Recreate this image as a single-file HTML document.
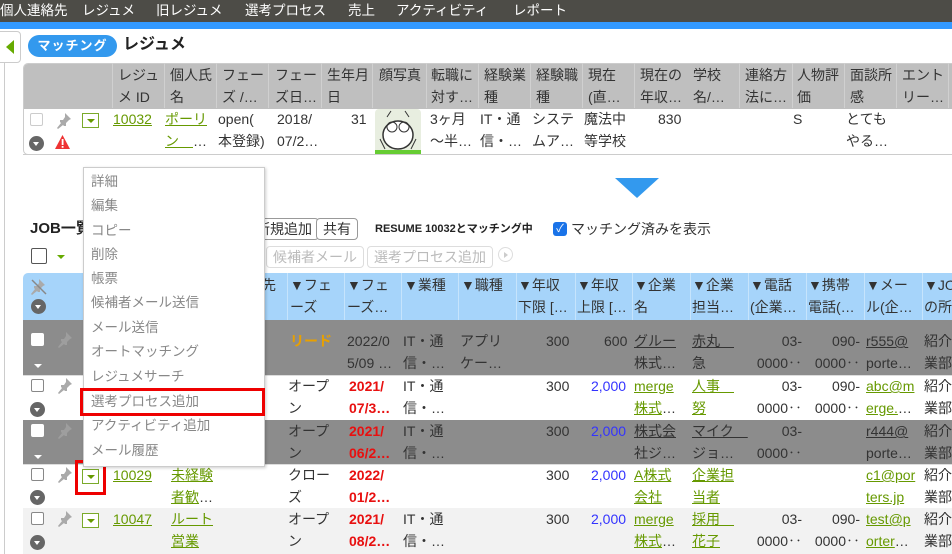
<!DOCTYPE html>
<html><head><meta charset="utf-8"><style>
*{margin:0;padding:0;box-sizing:border-box}
body{width:952px;height:554px;overflow:hidden;position:relative;background:#fff;font-family:"Liberation Sans","Noto Sans CJK JP",sans-serif;font-size:14px;color:#333}
.a{position:absolute;white-space:nowrap;line-height:22px}
.rt{text-align:right;width:60px}
.g{color:#669900;text-decoration:underline}
.r{color:#e81010;font-weight:bold}
.b{color:#3333ff}
.cb{position:absolute;width:13px;height:13px;border:1px solid #888;border-radius:2px;background:#fff}
.dc{position:absolute;width:15px;height:15px;border-radius:50%;background:#666}
.dc:after{content:"";position:absolute;left:4px;top:6px;border-left:3.5px solid transparent;border-right:3.5px solid transparent;border-top:4px solid #fff}
.gb{position:absolute;width:17px;height:15px;border:1px solid #7aaa2a;background:#fff}
.gb:after{content:"";position:absolute;left:4px;top:5px;border-left:4px solid transparent;border-right:4px solid transparent;border-top:4px solid #669900}
.pin{position:absolute;width:16px;height:18px}
.btn{position:absolute;border:1px solid #999;border-radius:4px;height:22px;line-height:20px;padding:0 6px;font-size:14px;background:#fff}
.dis{color:#bbb;border-color:#ddd}
.mi{position:absolute;left:91px;color:#888;font-size:13.5px;line-height:20px}
.vl{position:absolute;width:1px}
</style></head><body>
<svg width="0" height="0" style="position:absolute"><defs><g id="pn"><path d="M9 1 L15 7 L13 8 L10 11 L10 14 L8 14 L4 10 L4 8 L7 8 L9 5 Z M5 11 L1 16 L2 17 L7 13 Z" fill="#aaa"/></g></defs></svg>
<!-- nav -->
<div style="position:absolute;left:0;top:0;width:952px;height:22px;background:#4d4c47"></div>
<div style="position:absolute;left:0;top:22px;width:952px;height:7px;background:#3399ff"></div>
<div class="a" style="color:#fff;top:0;left:0;font-size:13.5px">個人連絡先</div>
<div class="a" style="color:#fff;top:0;left:82px;font-size:13.5px">レジュメ</div>
<div class="a" style="color:#fff;top:0;left:156px;font-size:13.5px">旧レジュメ</div>
<div class="a" style="color:#fff;top:0;left:245px;font-size:13.5px">選考プロセス</div>
<div class="a" style="color:#fff;top:0;left:348px;font-size:13.5px">売上</div>
<div class="a" style="color:#fff;top:0;left:396px;font-size:13.5px">アクティビティ</div>
<div class="a" style="color:#fff;top:0;left:513px;font-size:13.5px">レポート</div>
<!-- left tab -->
<div style="position:absolute;left:-4px;top:31px;width:25px;height:32px;border:1px solid #ccc;border-radius:4px;background:#fff"></div>
<div style="position:absolute;left:6px;top:40px;border-top:7px solid transparent;border-bottom:7px solid transparent;border-right:8px solid #66aa00"></div>
<div style="position:absolute;left:4px;top:62px;width:1px;height:492px;background:#ccc"></div>
<div style="position:absolute;left:28px;top:35px;width:89px;height:22px;border-radius:11px;background:#3399ee;color:#fff;font-weight:bold;font-size:13px;line-height:22px;text-align:center;letter-spacing:1px">マッチング</div>
<div class="a" style="left:123px;top:34px;font-size:16px;font-weight:bold;color:#222">レジュメ</div>
<!-- top table -->
<div style="position:absolute;left:23px;top:63px;width:940px;height:92px;border:1px solid #ccc;border-radius:5px;overflow:hidden">
<div style="position:absolute;left:0;top:0;width:100%;height:45px;background:#bfbfbf"></div>
</div>
<div style="position:absolute;left:23px;top:154px;width:929px;height:1px;background:#ccc"></div>
<div style="position:absolute;top:63px;left:0">
<div class="vl" style="left:112px;top:0;height:45px;background:#d0d0d0"></div><div class="vl" style="left:164px;height:45px;background:#d0d0d0"></div><div class="vl" style="left:216px;height:45px;background:#d0d0d0"></div><div class="vl" style="left:268px;height:45px;background:#d0d0d0"></div><div class="vl" style="left:321px;height:45px;background:#d0d0d0"></div><div class="vl" style="left:372px;height:45px;background:#d0d0d0"></div><div class="vl" style="left:426px;height:45px;background:#d0d0d0"></div><div class="vl" style="left:478px;height:45px;background:#d0d0d0"></div><div class="vl" style="left:530px;height:45px;background:#d0d0d0"></div><div class="vl" style="left:582px;height:45px;background:#d0d0d0"></div><div class="vl" style="left:634px;height:45px;background:#d0d0d0"></div><div class="vl" style="left:739px;height:45px;background:#d0d0d0"></div><div class="vl" style="left:792px;height:45px;background:#d0d0d0"></div><div class="vl" style="left:844px;height:45px;background:#d0d0d0"></div><div class="vl" style="left:896px;height:45px;background:#d0d0d0"></div><div class="vl" style="left:948px;height:45px;background:#d0d0d0"></div>
</div>
<div class="a" style="left:118px;top:64px">レジュ<br>メ ID</div>
<div class="a" style="left:170px;top:64px">個人氏<br>名</div>
<div class="a" style="left:222px;top:64px">フェー<br>ズ /…</div>
<div class="a" style="left:275px;top:64px">フェー<br>ズ日…</div>
<div class="a" style="left:327px;top:64px">生年月<br>日</div>
<div class="a" style="left:379px;top:64px">顔写真</div>
<div class="a" style="left:431px;top:64px">転職に<br>対す…</div>
<div class="a" style="left:484px;top:64px">経験業<br>種</div>
<div class="a" style="left:536px;top:64px">経験職<br>種</div>
<div class="a" style="left:588px;top:64px">現在<br>(直…</div>
<div class="a" style="left:640px;top:64px">現在の<br>年収…</div>
<div class="a" style="left:693px;top:64px">学校<br>名/…</div>
<div class="a" style="left:745px;top:64px">連絡方<br>法に…</div>
<div class="a" style="left:797px;top:64px">人物評<br>価</div>
<div class="a" style="left:850px;top:64px">面談所<br>感</div>
<div class="a" style="left:902px;top:64px">エント<br>リー…</div>
<div class="cb" style="left:30px;top:113px;border-color:#ccc"></div>
<div class="dc" style="left:29px;top:136px"></div>
<svg class="pin" style="left:56px;top:112px"><use href="#pn"/></svg>
<svg style="position:absolute;left:54px;top:134px" width="17" height="16"><path d="M8.5 1 L16 15 L1 15 Z" fill="#e33"/><rect x="7.7" y="5" width="1.8" height="6" fill="#fff"/><rect x="7.7" y="12" width="1.8" height="1.8" fill="#fff"/></svg>
<div class="gb" style="left:82px;top:113px"></div>
<div class="a g" style="left:113px;top:108px">10032</div>
<div class="a" style="left:165px;top:108px"><span class="g">ポーリ</span><br><span class="g">ン＿</span>…</div>
<div class="a" style="left:218px;top:108px">open(<br>本登録)</div>
<div class="a" style="left:277px;top:108px">2018/<br>07/2…</div>
<div class="a" style="left:351px;top:108px">31</div>
<div style="position:absolute;left:375px;top:109px;width:46px;height:45px;background:#e8eee0;border-radius:4px"><svg width="46" height="45"><ellipse cx="23" cy="26" rx="15" ry="14" fill="#fff" stroke="#333" stroke-width="1.5"/><circle cx="17" cy="18" r="5" fill="none" stroke="#333"/><circle cx="29" cy="18" r="5" fill="none" stroke="#333"/><path d="M12 8 L16 2 M34 8 L30 2 M5 30 L10 40 M41 30 L36 40" stroke="#333"/><rect x="0" y="41" width="46" height="4" fill="#6c3"/></svg></div>
<div class="a" style="left:430px;top:108px">3ヶ月<br>～半…</div>
<div class="a" style="left:480px;top:108px">IT・通<br>信・…</div>
<div class="a" style="left:532px;top:108px">システ<br>ムア…</div>
<div class="a" style="left:584px;top:108px">魔法中<br>等学校</div>
<div class="a" style="left:658px;top:108px">830</div>
<div class="a" style="left:793px;top:108px">S</div>
<div class="a" style="left:846px;top:108px">とても<br>やる…</div>
<!-- big triangle -->
<div style="position:absolute;left:615px;top:178px;border-left:22px solid transparent;border-right:22px solid transparent;border-top:20px solid #3399ee"></div>
<!-- job toolbar -->
<div class="a" style="left:30px;top:218px;font-weight:bold;font-size:15px;color:#222">JOB一覧</div>
<div class="btn" style="left:249px;top:218px">新規追加</div>
<div class="btn" style="left:316px;top:218px">共有</div>
<div class="a" style="left:375px;top:218px;font-size:11px;font-weight:bold;color:#222">RESUME 10032とマッチング中</div>
<div style="position:absolute;left:553px;top:222px;width:14px;height:14px;border-radius:3px;background:#1a73e8;color:#fff;font-size:11px;line-height:14px;text-align:center">✓</div>
<div class="a" style="left:571px;top:218px">マッチング済みを表示</div>
<div style="position:absolute;left:31px;top:248px;width:16px;height:16px;border:1.5px solid #555;border-radius:2px"></div>
<div style="position:absolute;left:57px;top:255px;border-left:4px solid transparent;border-right:4px solid transparent;border-top:4px solid #66aa00"></div>
<div class="btn dis" style="left:266px;top:246px">候補者メール</div>
<div class="btn dis" style="left:367px;top:246px">選考プロセス追加</div>
<div style="position:absolute;left:498px;top:247px;width:15px;height:15px;border-radius:50%;border:1px solid #ddd"></div>
<div style="position:absolute;left:504px;top:252px;border-top:3px solid transparent;border-bottom:3px solid transparent;border-left:4px solid #ccc"></div>
<!-- job table -->
<div style="position:absolute;left:23px;top:273px;width:940px;height:47px;background:#a6d4fa;border-radius:5px 0 0 0"></div>
<div style="position:absolute;left:23px;top:320px;width:929px;height:55px;background:#8c8c8c"></div>
<div style="position:absolute;left:23px;top:420px;width:929px;height:44px;background:#8c8c8c"></div>
<div style="position:absolute;left:23px;top:508px;width:929px;height:46px;background:#f2f2f2"></div>
<div style="position:absolute;left:23px;top:375px;width:929px;height:1px;background:#ddd"></div>
<div style="position:absolute;left:23px;top:464px;width:929px;height:1px;background:#ddd"></div>
<div class="vl" style="left:287px;top:273px;height:47px;background:#c6e4fc"></div><div class="vl" style="left:344px;top:273px;height:47px;background:#c6e4fc"></div><div class="vl" style="left:401px;top:273px;height:47px;background:#c6e4fc"></div><div class="vl" style="left:458px;top:273px;height:47px;background:#c6e4fc"></div><div class="vl" style="left:516px;top:273px;height:47px;background:#c6e4fc"></div><div class="vl" style="left:575px;top:273px;height:47px;background:#c6e4fc"></div><div class="vl" style="left:632px;top:273px;height:47px;background:#c6e4fc"></div><div class="vl" style="left:690px;top:273px;height:47px;background:#c6e4fc"></div><div class="vl" style="left:748px;top:273px;height:47px;background:#c6e4fc"></div><div class="vl" style="left:806px;top:273px;height:47px;background:#c6e4fc"></div><div class="vl" style="left:864px;top:273px;height:47px;background:#c6e4fc"></div><div class="vl" style="left:922px;top:273px;height:47px;background:#c6e4fc"></div>
<svg style="position:absolute;left:30px;top:278px" width="18" height="18"><use href="#pn" fill="#888"/><path d="M2 2 L16 16" stroke="#888" stroke-width="1.5"/></svg>
<div class="dc" style="left:31px;top:299px"></div>
<div class="a" style="left:262px;top:274px">先</div>
<div class="a" style="left:290px;top:274px">▼フェ<br>ーズ</div>
<div class="a" style="left:347px;top:274px">▼フェ<br>ーズ…</div>
<div class="a" style="left:404px;top:274px">▼業種</div>
<div class="a" style="left:461px;top:274px">▼職種</div>
<div class="a" style="left:518px;top:274px">▼年収<br>下限 […</div>
<div class="a" style="left:577px;top:274px">▼年収<br>上限 […</div>
<div class="a" style="left:634px;top:274px">▼企業<br>名</div>
<div class="a" style="left:692px;top:274px">▼企業<br>担当…</div>
<div class="a" style="left:750px;top:274px">▼電話<br>(企業…</div>
<div class="a" style="left:808px;top:274px">▼携帯<br>電話(…</div>
<div class="a" style="left:866px;top:274px">▼メー<br>ル(企…</div>
<div class="a" style="left:924px;top:274px">▼JO<br>の所…</div>
<!-- left column icons -->
<div class="cb" style="left:31px;top:333px;border-color:#fff"></div>
<div style="position:absolute;left:34px;top:364px;border-left:4px solid transparent;border-right:4px solid transparent;border-top:4px solid #fff"></div>
<svg class="pin" style="left:57px;top:331px;opacity:.6"><use href="#pn"/></svg>
<div class="cb" style="left:31px;top:379px"></div><div class="dc" style="left:30px;top:402px"></div><svg class="pin" style="left:57px;top:377px"><use href="#pn"/></svg>
<div class="cb" style="left:31px;top:424px;border-color:#fff"></div>
<div style="position:absolute;left:34px;top:455px;border-left:4px solid transparent;border-right:4px solid transparent;border-top:4px solid #fff"></div>
<svg class="pin" style="left:57px;top:422px;opacity:.6"><use href="#pn"/></svg>
<div class="cb" style="left:31px;top:468px"></div><div class="dc" style="left:30px;top:490px"></div><svg class="pin" style="left:57px;top:466px"><use href="#pn"/></svg>
<div class="cb" style="left:31px;top:512px"></div><div class="dc" style="left:30px;top:535px"></div><svg class="pin" style="left:57px;top:510px"><use href="#pn"/></svg>
<div class="gb" style="left:82px;top:469px"></div>
<div class="gb" style="left:82px;top:513px"></div>
<div style="position:absolute;left:75px;top:460px;width:31px;height:35px;border:3px solid #e00"></div>
<!-- row1 -->
<div class="a" style="left:290px;top:330px;color:#e8a000;font-weight:bold">リード</div>
<div class="a" style="left:347px;top:330px">2022/0<br>5/09 …</div>
<div class="a" style="left:403px;top:330px">IT・通<br>信・…</div>
<div class="a" style="left:460px;top:330px">アプリ<br>ケー…</div>
<div class="a" style="left:546px;top:330px">300</div>
<div class="a" style="left:604px;top:330px">600</div>
<div class="a" style="left:634px;top:330px"><span style="text-decoration:underline">グルー</span><br>株式…</div>
<div class="a" style="left:692px;top:330px"><span style="text-decoration:underline">赤丸　</span><br>急</div>
<div class="a rt" style="left:742px;top:330px">03-<br>0000‥</div>
<div class="a rt" style="left:800px;top:330px">090-<br>0000‥</div>
<div class="a" style="left:866px;top:330px"><span style="text-decoration:underline">r555@</span><br>porte…</div>
<div class="a" style="left:924px;top:330px">紹介<br>業部</div>
<!-- row2 -->
<div class="a" style="left:288px;top:375px">オープ<br>ン</div>
<div class="a r" style="left:349px;top:375px">2021/<br>07/3…</div>
<div class="a" style="left:403px;top:375px">IT・通<br>信・…</div>
<div class="a" style="left:546px;top:375px">300</div>
<div class="a b" style="left:591px;top:375px">2,000</div>
<div class="a" style="left:634px;top:375px"><span class="g">merge</span><br><span class="g">株式</span>…</div>
<div class="a" style="left:692px;top:375px"><span class="g">人事　</span><br><span class="g">努</span></div>
<div class="a rt" style="left:742px;top:375px">03-<br>0000‥</div>
<div class="a rt" style="left:800px;top:375px">090-<br>0000‥</div>
<div class="a" style="left:866px;top:375px"><span class="g">abc@m</span><br><span class="g">erge.</span>…</div>
<div class="a" style="left:924px;top:375px">紹介<br>業部</div>
<!-- row3 -->
<div class="a" style="left:288px;top:420px">オープ<br>ン</div>
<div class="a r" style="left:349px;top:420px">2021/<br>06/2…</div>
<div class="a" style="left:403px;top:420px">IT・通<br>信・…</div>
<div class="a" style="left:546px;top:420px">300</div>
<div class="a b" style="left:591px;top:420px">2,000</div>
<div class="a" style="left:634px;top:420px"><span style="text-decoration:underline">株式会</span><br>社ジ…</div>
<div class="a" style="left:692px;top:420px"><span style="text-decoration:underline">マイク　</span><br>ジョ…</div>
<div class="a rt" style="left:742px;top:420px">03-<br>0000‥</div>
<div class="a" style="left:866px;top:420px"><span style="text-decoration:underline">r444@</span><br>porte…</div>
<div class="a" style="left:924px;top:420px">紹介<br>業部</div>
<!-- row4 -->
<div class="a g" style="left:113px;top:464px">10029</div>
<div class="a" style="left:171px;top:464px"><span class="g">未経験</span><br><span class="g">者歓</span>…</div>
<div class="a" style="left:288px;top:464px">クロー<br>ズ</div>
<div class="a r" style="left:349px;top:464px">2022/<br>01/2…</div>
<div class="a" style="left:546px;top:464px">300</div>
<div class="a b" style="left:591px;top:464px">2,000</div>
<div class="a" style="left:634px;top:464px"><span class="g">A株式</span><br><span class="g">会社</span></div>
<div class="a" style="left:692px;top:464px"><span class="g">企業担</span><br><span class="g">当者</span></div>
<div class="a" style="left:866px;top:464px"><span class="g">c1@por</span><br><span class="g">ters.jp</span></div>
<div class="a" style="left:924px;top:464px">紹介<br>業部</div>
<!-- row5 -->
<div class="a g" style="left:113px;top:508px">10047</div>
<div class="a" style="left:171px;top:508px"><span class="g">ルート</span><br><span class="g">営業</span></div>
<div class="a" style="left:288px;top:508px">オープ<br>ン</div>
<div class="a r" style="left:349px;top:508px">2021/<br>08/2…</div>
<div class="a" style="left:403px;top:508px">IT・通<br>信・…</div>
<div class="a" style="left:546px;top:508px">300</div>
<div class="a b" style="left:591px;top:508px">2,000</div>
<div class="a" style="left:634px;top:508px"><span class="g">merge</span><br><span class="g">株式</span>…</div>
<div class="a" style="left:692px;top:508px"><span class="g">採用　</span><br><span class="g">花子</span></div>
<div class="a rt" style="left:742px;top:508px">03-<br>0000‥</div>
<div class="a rt" style="left:800px;top:508px">090-<br>0000‥</div>
<div class="a" style="left:866px;top:508px"><span class="g">test@p</span><br><span class="g">orter</span>…</div>
<div class="a" style="left:924px;top:508px">紹介<br>業部</div>
<!-- menu -->
<div style="position:absolute;left:83px;top:167px;width:182px;height:300px;background:#fff;border:1px solid #ccc;box-shadow:1px 1px 3px rgba(0,0,0,.2)"></div>
<div class="mi" style="top:172px">詳細</div>
<div class="mi" style="top:196px">編集</div>
<div class="mi" style="top:221px">コピー</div>
<div class="mi" style="top:245px">削除</div>
<div class="mi" style="top:269px">帳票</div>
<div class="mi" style="top:293px">候補者メール送信</div>
<div class="mi" style="top:318px">メール送信</div>
<div class="mi" style="top:342px">オートマッチング</div>
<div class="mi" style="top:367px">レジュメサーチ</div>
<div class="mi" style="top:392px">選考プロセス追加</div>
<div class="mi" style="top:416px">アクティビティ追加</div>
<div class="mi" style="top:441px">メール履歴</div>
<div style="position:absolute;left:80px;top:388px;width:185px;height:28px;border:3px solid #e00"></div>
</body></html>
